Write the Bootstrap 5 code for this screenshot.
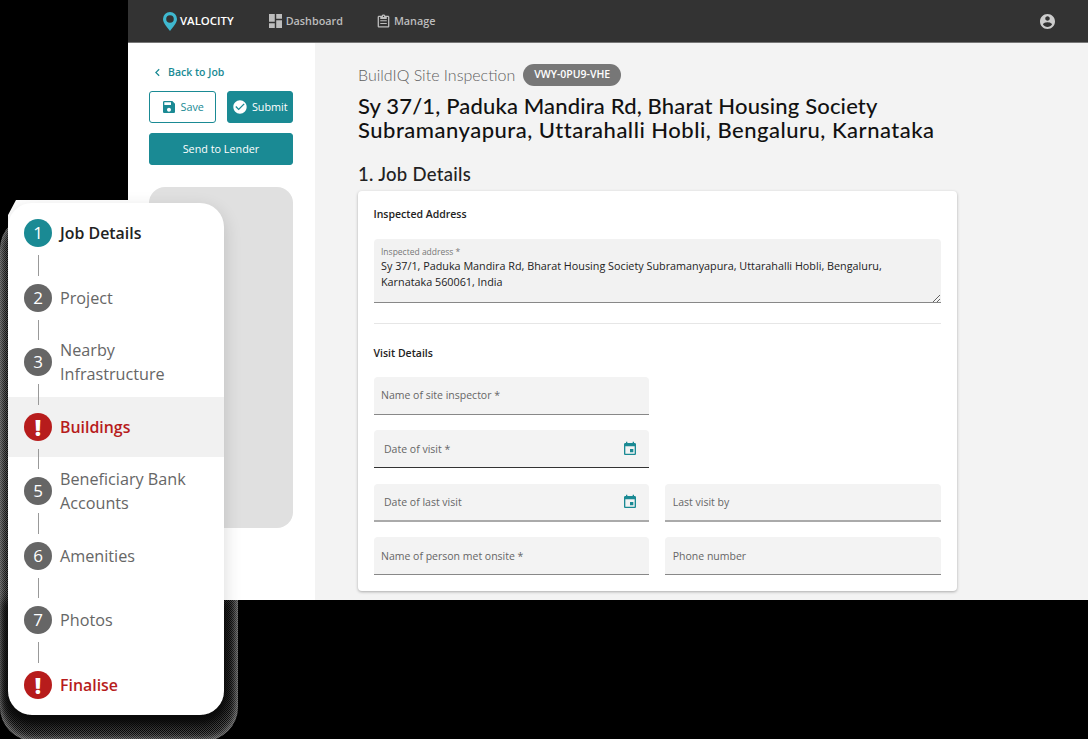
<!DOCTYPE html>
<html lang="en">

<head>
  <meta charset="UTF-8" />
  <meta name="viewport" content="width=device-width, initial-scale=1" />
  <title>BuildIQ Site Inspection</title>
  <link href="https://cdn.jsdelivr.net/npm/bootstrap@5.3.3/dist/css/bootstrap.min.css" rel="stylesheet">
  <style>
    html, body { height: 739px; overflow: hidden; }
    body { background: #000; font-family: "Open Sans", "Liberation Sans", sans-serif; position: relative; }

    .app-window { margin-left: 128px; height: 600px; position: relative; z-index: 1; background: #fff; }
    .top-bar { height: 43px; padding: 0 0 0 35px; background: #333; border-bottom: 1px solid #777; }
    .brand-name { color: #fff; font-size: 11.4px; font-weight: 600; margin-left: 3px; }
    .top-link { color: #bdbdbd; font-size: 10.8px; font-weight: 600; text-decoration: none; gap: 4px; }
    .top-link svg { width: 13px; height: 14px; fill: #bdbdbd; }
    .top-links { margin-left: 35px; gap: 34px; }
    .user-icon { width: 15px; height: 15px; fill: #ccc; margin-left: auto; margin-right: 33px; }

    .app-body { height: 557px; }
    .side-col { width: 187px; padding: 21px 22px 0 21px; background: #fff; }
    .back-link { color: #1a8a94; font-size: 10.5px; font-weight: 600; text-decoration: none; margin-left: 1px; height: 17px; }
    .back-link svg { width: 15px; height: 15px; fill: #1a8a94; margin-right: 3px; }
    .btn-save, .btn-teal { font-size: 10.8px; font-weight: 500; height: 32px; border-radius: 3px; padding: 0; }
    .btn-save { color: #1a8a94; background: #fff; border: 1px solid #1a8a94; }
    .btn-teal { color: #fff; background: #1a8a94; border: 1px solid #1a8a94; }
    .btn-save svg, .btn-teal svg { width: 16px; height: 16px; }
    .btn-save svg { fill: #1a8a94; }
    .btn-teal svg { fill: #fff; }
    .side-buttons { margin-top: 10px; gap: 11px; }
    .side-send { margin-top: 10px; }
    .side-panel { height: 341px; margin-top: 22px; border-radius: 16px; background: #e0e0e0; }

    .main-col { background: #f3f3f3; padding: 20px 131px 0 43px; }
    .head-kicker { font-family: Lato, sans-serif; font-weight: 300; font-size: 16px; color: #5f5f5f; }
    .job-code { background: #777; color: #fff; font-size: 10.5px; font-weight: 600; border-radius: 11px; height: 22px; width: 98px; }
    .head-title { font-family: Lato, sans-serif; font-weight: 500; font-size: 22px; line-height: 24px; color: #111; margin: 7px 0 0; letter-spacing: .5px; }
    .title-first { letter-spacing: .16px; }
    .section-title { font-family: Lato, sans-serif; font-weight: 500; font-size: 18.5px; line-height: 24px; color: #222; margin: 20px 0 5px; letter-spacing: .3px; }
    .form-sheet { background: #fff; border-radius: 4px; box-shadow: 0 1px 3px rgba(0, 0, 0, .3); padding: 15px 16px 16px 15.5px; height: 400px; }
    .group-label { font-size: 10.5px; font-weight: 600; color: #222; line-height: 16px; }
    .addr-box { background: #f2f2f2; border-bottom: 1px solid #888; border-radius: 4px 4px 0 0; height: 64px; margin-top: 17px; padding: 8px 0 0 7.5px; }
    .addr-label { font-size: 8.5px; line-height: 10px; color: #777; }
    .addr-box textarea { width: 100%; height: 45px; margin-top: 1px; border: 0; outline: 0; padding: 0 40px 0 0; background: transparent; font-size: 10.8px; font-weight: 500; line-height: 16px; color: #222; display: block; }
    .sheet-rule { margin: 20px 0 21px; border-color: #e6e6e6; opacity: 1; }
    .fld { height: 38px; background: #f3f3f3; border-bottom: 1px solid #888; border-radius: 4px 4px 0 0; padding: 2px 11px 0 7.5px; font-size: 10.5px; color: #666; }
    .fld-date { padding-left: 10.5px; }
    .fld-dark { border-bottom-color: #333; }
    .fld-thick { border-bottom: 2px solid #aaa; }
    .fld svg { width: 16px; height: 16px; fill: #1a8a94; margin-top: -2px; }
    .visit-grid { margin-top: 0; --bs-gutter-x: 16px; --bs-gutter-y: 15.5px; }

    /* floating stepper over the window */
    .step-halo { position: absolute; left: 0; top: 215px; width: 238px; height: 526px; border-radius: 34px; background: repeating-conic-gradient(#0a0a0a 0 25%, #4a4a4a 0 50%) 0 0 / 2px 2px; box-shadow: inset 0 0 7px 2px rgba(200, 200, 200, .55); }
    .step-tab { position: absolute; left: 8px; top: 200px; width: 120px; height: 30px; z-index: 2; background: #fff; clip-path: polygon(8px 0, 100% 0, 100% 100%, 0 100%, 0 15px); }
    .step-card { position: absolute; left: 8px; top: 203px; width: 216px; height: 512px; z-index: 2; background: #fff; border-radius: 24px; padding: 16px; box-shadow: 0 6px 18px rgba(0, 0, 0, .16); }
    .step-bottom-shade { position: absolute; left: 8px; top: 600px; width: 216px; height: 115px; border-radius: 0 0 24px 24px; box-shadow: 0 6px 8px 5px #0c0c0c; }
    .step-row { height: 28px; gap: 8px; position: relative; font-size: 16.2px; font-weight: 500; line-height: 24px; color: #666; }
    .step-row > * { position: relative; z-index: 1; }
    .step-row.is-active { color: #222; font-weight: 600; font-size: 15.9px; }
    .step-row.is-error { color: #b71c1c; font-weight: 600; font-size: 15.9px; }
    .step-row.is-current::before { content: ""; position: absolute; left: -16px; right: -16px; top: -16px; bottom: -16px; background: #f1f1f1; z-index: 0; }
    .step-dot { width: 28px; height: 28px; flex: none; border-radius: 50%; background: #666; color: #fff; font-size: 17px; font-weight: 500; }
    .is-active .step-dot { background: #1a8a94; }
    .is-error .step-dot { background: #b71c1c; font-size: 22px; font-weight: 800; }
    .step-line { width: 1px; height: 20.5px; margin: 8px 0 8px 14px; background: #999; position: relative; z-index: 1; }
  </style>
</head>

<body>

  <div class="step-halo"></div>
  <div class="step-bottom-shade"></div>

  <div class="app-window">
    <nav class="top-bar d-flex align-items-center">
      <svg width="14" height="19" viewBox="0 0 14 19"><path fill="#3fb8cf" fill-rule="evenodd" d="M7 0a7 7 0 0 1 7 7c0 4-4 8-7 12C4 15 0 11 0 7a7 7 0 0 1 7-7zm0 3.2a3.8 3.8 0 1 0 0 7.6 3.8 3.8 0 0 0 0-7.6z"/></svg>
      <span class="brand-name">VALOCITY</span>
      <div class="top-links d-flex">
        <a class="top-link d-flex align-items-center" href="#"><svg viewBox="3 3 18 18" preserveAspectRatio="none"><path d="M3 13h8V3H3v10zm0 8h8v-6H3v6zm10 0h8V11h-8v10zm0-18v6h8V3h-8z"/></svg>Dashboard</a>
        <a class="top-link d-flex align-items-center" href="#"><svg viewBox="2 1 20 20"><path d="M19 3h-4.18C14.4 1.84 13.3 1 12 1c-1.3 0-2.4.84-2.82 2H5c-1.1 0-2 .9-2 2v14c0 1.1.9 2 2 2h14c1.1 0 2-.9 2-2V5c0-1.1-.9-2-2-2zm-7 0c.55 0 1 .45 1 1s-.45 1-1 1-1-.45-1-1 .45-1 1-1zm7 16H5V5h2v3h10V5h2v14zM7 10h10v1.5H7zM7 14h10v1.5H7z"/></svg>Manage</a>
      </div>
      <svg class="user-icon" viewBox="2 2 20 20"><path d="M12 2C6.48 2 2 6.48 2 12s4.48 10 10 10 10-4.48 10-10S17.52 2 12 2zm0 3c1.66 0 3 1.34 3 3s-1.34 3-3 3-3-1.34-3-3 1.34-3 3-3zm0 14.2c-2.5 0-4.71-1.28-6-3.22.03-1.99 4-3.08 6-3.08 1.99 0 5.97 1.09 6 3.08-1.29 1.94-3.5 3.22-6 3.22z"/></svg>
    </nav>

    <div class="app-body d-flex">
      <aside class="side-col flex-shrink-0">
        <a class="back-link d-flex align-items-center" href="#"><svg viewBox="0 0 24 24"><path d="M15.41 7.41L14 6l-6 6 6 6 1.41-1.41L10.83 12z"/></svg>Back to Job</a>
        <div class="side-buttons d-flex">
          <button class="btn-save btn d-flex align-items-center justify-content-center gap-1 w-100" type="button"><svg viewBox="0 0 24 24"><path d="M17 3H5c-1.11 0-2 .9-2 2v14c0 1.1.89 2 2 2h14c1.1 0 2-.9 2-2V7l-4-4zm-5 16c-1.66 0-3-1.34-3-3s1.34-3 3-3 3 1.34 3 3-1.34 3-3 3zm3-10H5V5h10v4z"/></svg>Save</button>
          <button class="btn-teal btn d-flex align-items-center justify-content-center gap-1 w-100" type="button"><svg viewBox="0 0 24 24"><path d="M12 2C6.48 2 2 6.48 2 12s4.48 10 10 10 10-4.48 10-10S17.52 2 12 2zm-2 15l-5-5 1.41-1.41L10 14.17l7.59-7.59L19 8l-9 9z"/></svg>Submit</button>
        </div>
        <button class="btn-teal btn w-100 side-send d-block" type="button">Send to Lender</button>
        <div class="side-panel"></div>
      </aside>

      <main class="main-col flex-grow-1">
        <div class="d-flex align-items-center gap-2">
          <span class="head-kicker">BuildIQ Site Inspection</span>
          <span class="job-code d-flex align-items-center justify-content-center">VWY-0PU9-VHE</span>
        </div>
        <h1 class="head-title"><span class="title-first">Sy 37/1, Paduka Mandira Rd, Bharat Housing Society</span><br>Subramanyapura, Uttarahalli Hobli, Bengaluru, Karnataka</h1>
        <h2 class="section-title">1. Job Details</h2>

        <div class="form-sheet">
          <div class="group-label">Inspected Address</div>
          <div class="addr-box">
            <div class="addr-label">Inspected address *</div>
            <textarea spellcheck="false">Sy 37/1, Paduka Mandira Rd, Bharat Housing Society Subramanyapura, Uttarahalli Hobli, Bengaluru, Karnataka 560061, India</textarea>
          </div>
          <hr class="sheet-rule">
          <div class="group-label">Visit Details</div>
          <div class="row visit-grid">
            <div class="col-6"><div class="fld d-flex align-items-center">Name of site inspector *</div></div>
            <div class="col-6"></div>
            <div class="col-6"><div class="fld fld-date fld-dark d-flex align-items-center justify-content-between">Date of visit *<svg viewBox="0 0 24 24"><path d="M17 12h-5v5h5v-5zM16 1v2H8V1H6v2H5c-1.11 0-1.99.9-1.99 2L3 19c0 1.1.89 2 2 2h14c1.1 0 2-.9 2-2V5c0-1.1-.9-2-2-2h-1V1h-2zm3 18H5V8h14v11z"/></svg></div></div>
            <div class="col-6"></div>
            <div class="col-6"><div class="fld fld-date fld-thick d-flex align-items-center justify-content-between">Date of last visit<svg viewBox="0 0 24 24"><path d="M17 12h-5v5h5v-5zM16 1v2H8V1H6v2H5c-1.11 0-1.99.9-1.99 2L3 19c0 1.1.89 2 2 2h14c1.1 0 2-.9 2-2V5c0-1.1-.9-2-2-2h-1V1h-2zm3 18H5V8h14v11z"/></svg></div></div>
            <div class="col-6"><div class="fld fld-thick d-flex align-items-center">Last visit by</div></div>
            <div class="col-6"><div class="fld d-flex align-items-center">Name of person met onsite *</div></div>
            <div class="col-6"><div class="fld d-flex align-items-center">Phone number</div></div>
          </div>
        </div>
      </main>
    </div>
  </div>

  <div class="step-tab"></div>
  <div class="step-card">
    <div class="step-row is-active d-flex align-items-center"><span class="step-dot d-flex align-items-center justify-content-center">1</span><span>Job Details</span></div>
    <div class="step-line"></div>
    <div class="step-row d-flex align-items-center"><span class="step-dot d-flex align-items-center justify-content-center">2</span><span>Project</span></div>
    <div class="step-line"></div>
    <div class="step-row d-flex align-items-center"><span class="step-dot d-flex align-items-center justify-content-center">3</span><span>Nearby<br>Infrastructure</span></div>
    <div class="step-line"></div>
    <div class="step-row is-error is-current d-flex align-items-center"><span class="step-dot d-flex align-items-center justify-content-center">!</span><span>Buildings</span></div>
    <div class="step-line"></div>
    <div class="step-row d-flex align-items-center"><span class="step-dot d-flex align-items-center justify-content-center">5</span><span>Beneficiary Bank<br>Accounts</span></div>
    <div class="step-line"></div>
    <div class="step-row d-flex align-items-center"><span class="step-dot d-flex align-items-center justify-content-center">6</span><span>Amenities</span></div>
    <div class="step-line"></div>
    <div class="step-row d-flex align-items-center"><span class="step-dot d-flex align-items-center justify-content-center">7</span><span>Photos</span></div>
    <div class="step-line"></div>
    <div class="step-row is-error d-flex align-items-center"><span class="step-dot d-flex align-items-center justify-content-center">!</span><span>Finalise</span></div>
  </div>

  <script src="https://cdn.jsdelivr.net/npm/bootstrap@5.3.3/dist/js/bootstrap.bundle.min.js"></script>
</body>

</html>
